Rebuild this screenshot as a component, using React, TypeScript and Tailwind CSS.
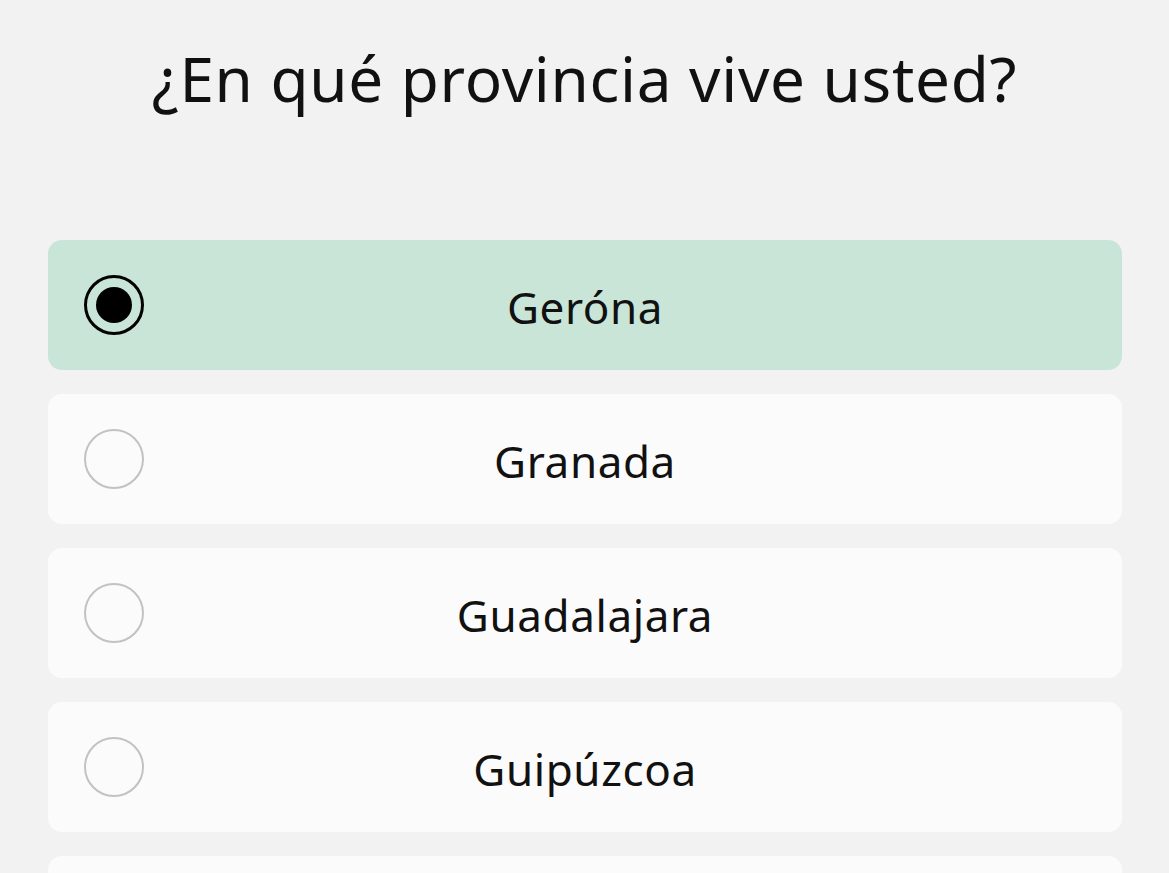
import React from "react";

const options = [
  { label: "Geróna", selected: true },
  { label: "Granada", selected: false },
  { label: "Guadalajara", selected: false },
  { label: "Guipúzcoa", selected: false },
  { label: "", selected: false },
];

export default function App() {
  return (
    <div
      className="w-[1169px] h-[873px] overflow-hidden bg-[#f2f2f2] text-[#111111]"
      style={{ fontFamily: '"Noto Sans", "Open Sans", sans-serif' }}
    >
      <h1 className="pt-[36px] text-center text-[62px] leading-[84px] font-normal tracking-[0.7px]">
        ¿En qué provincia vive usted?
      </h1>
      <div className="mt-[120px] pl-[48px] pr-[47px] flex flex-col gap-[24px]">
        {options.map((o, i) => (
          <div
            key={i}
            className={
              "relative h-[130px] shrink-0 rounded-[14px] flex items-center justify-center " +
              (o.selected ? "bg-[#c8e5d8]" : "bg-[#fbfbfb]")
            }
          >
            <div className="absolute left-[36px] top-1/2 -translate-y-1/2">
              {o.selected ? (
                <div className="w-[60px] h-[60px] rounded-full border-[3px] border-black flex items-center justify-center">
                  <div className="w-[36px] h-[36px] rounded-full bg-black" />
                </div>
              ) : (
                <div className="w-[60px] h-[60px] rounded-full border-[2.5px] border-[#c2c2c2]" />
              )}
            </div>
            {o.label && (
              <span className="pt-[4px] text-[44px] leading-none tracking-[0.6px]">
                {o.label}
              </span>
            )}
          </div>
        ))}
      </div>
    </div>
  );
}
